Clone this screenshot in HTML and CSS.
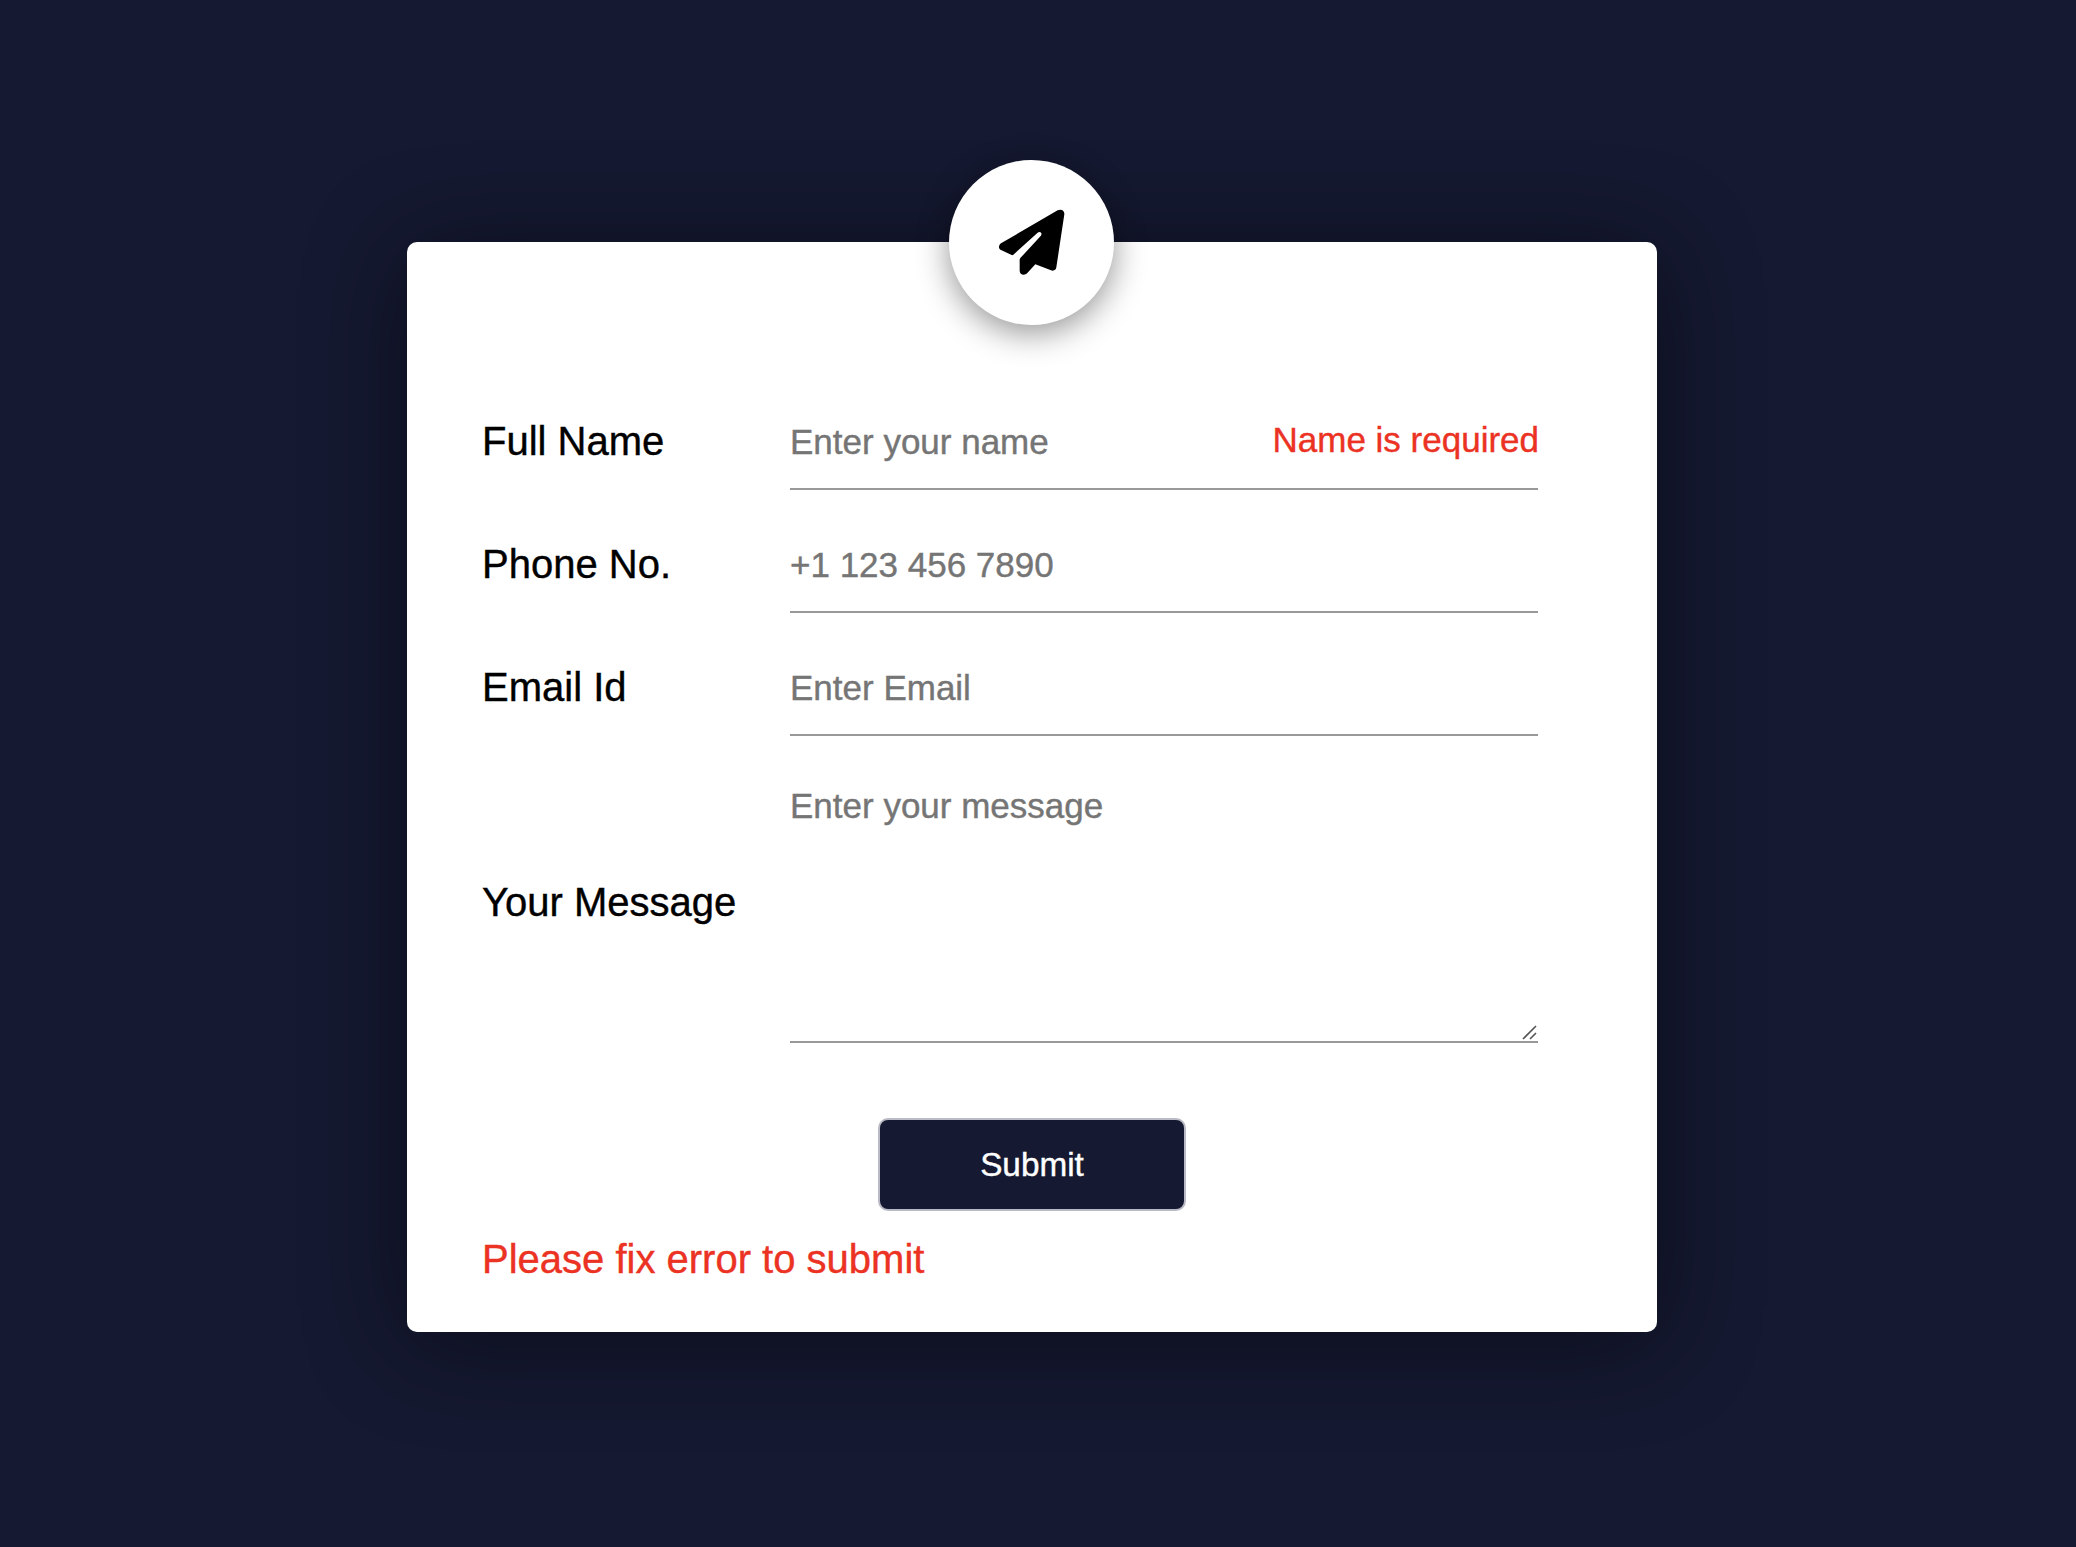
FILE: index.html
```html
<!DOCTYPE html>
<html lang="en">
<head>
<meta charset="utf-8">
<title>Contact form</title>
<link rel="stylesheet" href="styles.css">
</head>
<body>
<form class="card" novalidate>
  <div class="badge">
    <svg class="plane" viewBox="205 202 204 204" aria-hidden="true">
      <path d="M384 209C394 204 405 209 404 221L380 380C379 388 372 392 364 389L317 371L293 397C285 406 270 403 270 390V359C270 355 271 353 274 350L333 286C340 278 331 270 323 277L251 342C250 343 248 344 246 343L214 328C206 324 206 314 214 308Z"/>
    </svg>
  </div>
  <div class="row">
    <label class="label" for="name">Full Name</label>
    <div class="field">
      <input class="control" id="name" type="text" placeholder="Enter your name">
      <span class="field-error">Name is required</span>
    </div>
  </div>
  <div class="row">
    <label class="label" for="phone">Phone No.</label>
    <div class="field">
      <input class="control" id="phone" type="text" placeholder="+1 123 456 7890">
    </div>
  </div>
  <div class="row">
    <label class="label" for="email">Email Id</label>
    <div class="field">
      <input class="control" id="email" type="text" placeholder="Enter Email">
    </div>
  </div>
  <div class="row">
    <label class="label" for="message">Your Message</label>
    <div class="field">
      <textarea class="control message" id="message" placeholder="Enter your message"></textarea>
      <svg class="grip" viewBox="0 0 15 15" aria-hidden="true"><path d="M1 14L14 1M8 14L14 8"/></svg>
    </div>
  </div>
  <button class="submit" type="button">Submit</button>
  <span class="form-error">Please fix error to submit</span>
</form>
</body>
</html>
```

FILE: styles.css
```css
* {
  box-sizing: border-box;
}

body {
  margin: 0;
  height: 1547px;
  padding: 242px 0 0 407px;
  background: #151931;
  font-family: "Liberation Sans", Arial, sans-serif;
  -webkit-text-stroke-width: 0.4px;
  overflow: hidden;
}

.card {
  position: relative;
  display: flex;
  flex-direction: column;
  gap: 25px;
  width: 1250px;
  height: 1090px;
  padding: 150px 75px 50px;
  border-radius: 10px;
  background: #fff;
  box-shadow: 0 10px 100px rgba(0, 0, 0, 0.45);
}

.badge {
  position: absolute;
  top: -82.5px;
  left: 542px;
  display: flex;
  align-items: center;
  justify-content: center;
  width: 165px;
  height: 165px;
  border-radius: 50%;
  background: #fff;
  box-shadow: 0 8px 32px rgba(0, 0, 0, 0.42);
}

.plane {
  width: 68px;
  height: 68px;
}

.row {
  display: grid;
  grid-template-columns: 308px 748px;
  align-items: center;
}

.label,
.form-error {
  font-size: 40px;
  line-height: 46px;
  color: #000;
}

.field {
  position: relative;
  display: flex;
}

.control {
  width: 100%;
  height: 98px;
  margin: 0;
  padding: 3px 0 0;
  border: 0;
  border-bottom: 2px solid #999;
  border-radius: 0;
  outline: 0;
  background: transparent;
  font: 35px/40px "Liberation Sans", Arial, sans-serif;
}

.control::placeholder {
  color: #757575;
  opacity: 1;
}

.message {
  height: 282px;
  padding: 25px 0 0;
  resize: none;
}

.field-error {
  position: absolute;
  top: 28px;
  right: -1px;
  font-size: 35px;
  line-height: 40px;
  white-space: nowrap;
  color: #eb3223;
}

.grip {
  position: absolute;
  right: 1px;
  bottom: 3px;
  width: 15px;
  height: 15px;
  fill: none;
  stroke: #555;
  stroke-width: 1.6;
}

.submit {
  align-self: center;
  width: 308px;
  height: 93px;
  margin-top: 50px;
  padding: 0;
  border: 2px solid #b9bac4;
  border-radius: 10px;
  background: #151931;
  color: #fff;
  font: 33.333px/38px "Liberation Sans", Arial, sans-serif;
}

.form-error {
  color: #eb3223;
}
```
